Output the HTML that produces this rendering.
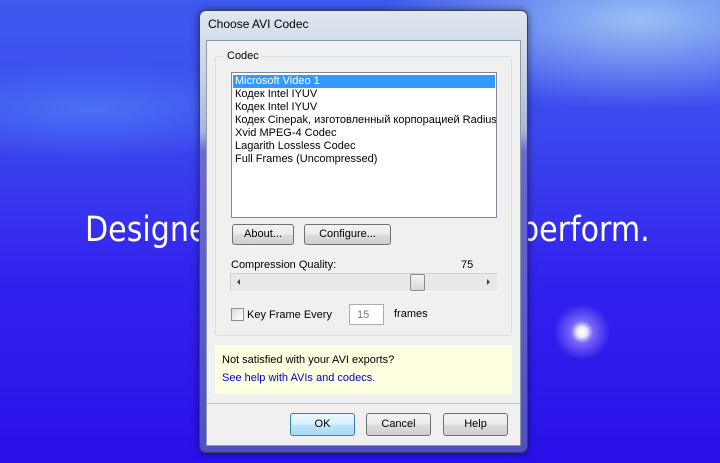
<!DOCTYPE html>
<html><head><style>
*{margin:0;padding:0;box-sizing:border-box}
body{width:720px;height:463px;overflow:hidden;position:relative;font-family:"Liberation Sans",sans-serif;font-size:11px;color:#000;
background:
radial-gradient(circle at 582px 332px,#fff 0,#eeeaff 5px,rgba(190,180,255,.5) 11px,rgba(120,110,255,0) 28px),
radial-gradient(ellipse 260px 90px at 640px 20px,rgba(170,210,245,.85),rgba(120,160,245,0)),
radial-gradient(ellipse 200px 50px at 90px 110px,rgba(90,150,250,.5),rgba(90,150,250,0)),
linear-gradient(180deg,#3f5aee 0,#3a46ee 30%,#3322ee 60%,#2a10ea 100%);}
.a{position:absolute}
.big{font-family:"DejaVu Sans",sans-serif;font-size:35px;color:#fff;top:210px;transform:scaleX(.86);transform-origin:left top}
.frame{left:199px;top:10px;width:329px;height:443px;border:1px solid #3a3f5a;border-radius:7px;
background:linear-gradient(180deg,#dfe6ef 0,#c9d5e3 60px,#a9b6dc 120px,#6a6ad0 140px,#5050c4 100%);box-shadow:0 0 8px rgba(0,0,0,.5)}
.client{left:206px;top:40px;width:315px;height:406px;background:#f0f0f0;border:1px solid #8e98aa}
.grp{border:1px solid #d5dfe5;border-radius:3px}
.list{left:231px;top:72px;width:266px;height:146px;background:#fff;border:1px solid #828790;overflow:hidden;white-space:nowrap}
.list div{height:13px;line-height:13px;padding-left:3px}
.btn{border:1px solid #707070;border-radius:3px;background:linear-gradient(#f2f2f2,#ebebeb 50%,#dddddd 51%,#cfcfcf);text-align:center;line-height:19px}
</style></head><body>
<div class="a big" style="left:85px">Designe</div>
<div class="a big" style="left:520px">perform.</div>
<div class="a frame"></div>
<div class="a" style="left:208px;top:17px;font-size:12px;color:#000">Choose AVI Codec</div>
<div class="a client"></div>
<div class="a grp" style="left:215px;top:56px;width:297px;height:280px"></div>
<div class="a" style="left:224px;top:50px;background:#f0f0f0;padding:0 3px;font-size:11px">Codec</div>
<div class="a list">
<div style="background:#3399ff;color:#fff;margin:2px 1px 0 1px;padding-left:2px">Microsoft Video 1</div>
<div>Кодек Intel IYUV</div>
<div>Кодек Intel IYUV</div>
<div>Кодек Cinepak, изготовленный корпорацией Radius</div>
<div>Xvid MPEG-4 Codec</div>
<div>Lagarith Lossless Codec</div>
<div>Full Frames (Uncompressed)</div>
</div>
<div class="a btn" style="left:232px;top:224px;width:62px;height:21px">About...</div>
<div class="a btn" style="left:304px;top:224px;width:87px;height:21px">Configure...</div>
<div class="a" style="left:231px;top:259px">Compression Quality:</div>
<div class="a" style="left:461px;top:259px">75</div>
<div class="a" style="left:230px;top:273px;width:267px;height:19px;background:#e8e8e8;border-top:1px solid #d0d0d0;border-left:1px solid #d0d0d0;border-bottom:1px solid #f8f8f8"></div>
<div class="a" style="left:237px;top:279px;width:0;height:0;border-top:3px solid transparent;border-bottom:3px solid transparent;border-right:3px solid #444"></div>
<div class="a" style="left:487px;top:279px;width:0;height:0;border-top:3px solid transparent;border-bottom:3px solid transparent;border-left:3px solid #444"></div>
<div class="a" style="left:410px;top:274px;width:15px;height:17px;border:1px solid #8a8a8a;border-radius:2px;background:linear-gradient(#f4f4f4,#d8d8d8)"></div>
<div class="a" style="left:231px;top:308px;width:13px;height:13px;border:1px solid #8f8f8f;background:linear-gradient(135deg,#ddd,#fff)"></div>
<div class="a" style="left:247px;top:309px">Key Frame Every</div>
<div class="a" style="left:349px;top:304px;width:35px;height:21px;border:1px solid #abadb3;background:#fff;color:#777;padding:4px 0 0 7px">15</div>
<div class="a" style="left:394px;top:308px">frames</div>
<div class="a" style="left:215px;top:345px;width:297px;height:49px;background:#ffffe1"></div>
<div class="a" style="left:222px;top:354px">Not satisfied with your AVI exports?</div>
<div class="a" style="left:222px;top:372px;color:#0000cc">See help with AVIs and codecs.</div>
<div class="a" style="left:207px;top:403px;width:313px;height:1px;background:#c8c8c8"></div>
<div class="a btn" style="left:290px;top:413px;width:65px;height:23px;line-height:21px;border-color:#3c7fb1;background:linear-gradient(#eaf6fd,#d9f0fc 50%,#bee6fd 51%,#a7d9f5)">OK</div>
<div class="a btn" style="left:366px;top:413px;width:65px;height:23px;line-height:21px">Cancel</div>
<div class="a btn" style="left:443px;top:413px;width:65px;height:23px;line-height:21px">Help</div>
</body></html>
